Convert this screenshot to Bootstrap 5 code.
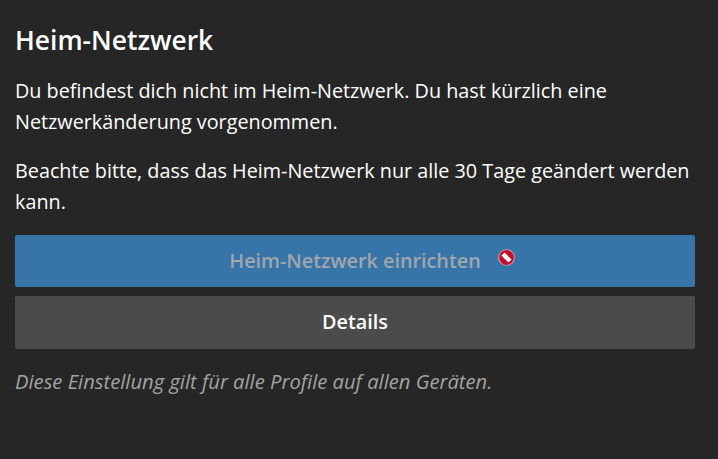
<!DOCTYPE html>
<html lang="de">
<head>
<meta charset="utf-8">
<title>Heim-Netzwerk</title>
<link href="https://cdn.jsdelivr.net/npm/bootstrap@5.3.0/dist/css/bootstrap.min.css" rel="stylesheet">
<style>
body { background: #262626; color: #fff; font-family: "Open Sans", sans-serif; font-size: 19.8px; line-height: 31px; }
.home-box { padding: 22px 23px 0 15px; }
.home-title { font-size: 26.4px; font-weight: 600; line-height: 36px; margin-bottom: 17px; }
.home-text { margin-bottom: 18px; }
.home-btn { display: flex; align-items: center; justify-content: center; width: 100%; height: 52px; padding: 0 0 2px; border: 0; border-radius: 2px; font-size: 19.8px; font-weight: 600; }
.btn-setup { background: #3775a9; color: #a0a6ab; margin-bottom: 9px; }
.btn-details { background: #4b4b4b; color: #fff; height: 53px; }
.setup-label { position: relative; }
.setup-icon { position: absolute; left: calc(100% + 17px); top: 4px; }
.home-note { font-style: italic; font-weight: 500; font-size: 20.2px; color: #a3a3a3; margin-top: 17px; }
</style>
</head>
<body>
<div class="home-box">
    <h1 class="home-title">Heim-Netzwerk</h1>
    <p class="home-text">Du befindest dich nicht im Heim-Netzwerk. Du hast kürzlich eine Netzwerkänderung vorgenommen.</p>
    <p class="home-text">Beachte bitte, dass das Heim-Netzwerk nur alle 30 Tage geändert werden kann.</p>
    <button class="home-btn btn-setup" disabled>
        <span class="setup-label">Heim-Netzwerk einrichten
            <svg class="setup-icon" width="17" height="17" viewBox="0 0 17 17"><circle cx="8.5" cy="8.5" r="8.3" fill="#d9a3ad"/><circle cx="8.5" cy="8.5" r="7.4" fill="#c40f2b"/><path d="M5 5l7 7" stroke="#fff" stroke-width="4.4"/></svg>
        </span>
    </button>
    <button class="home-btn btn-details">Details</button>
    <p class="home-note">Diese Einstellung gilt für alle Profile auf allen Geräten.</p>
</div>
<script src="https://cdn.jsdelivr.net/npm/bootstrap@5.3.0/dist/js/bootstrap.bundle.min.js"></script>
</body>
</html>
